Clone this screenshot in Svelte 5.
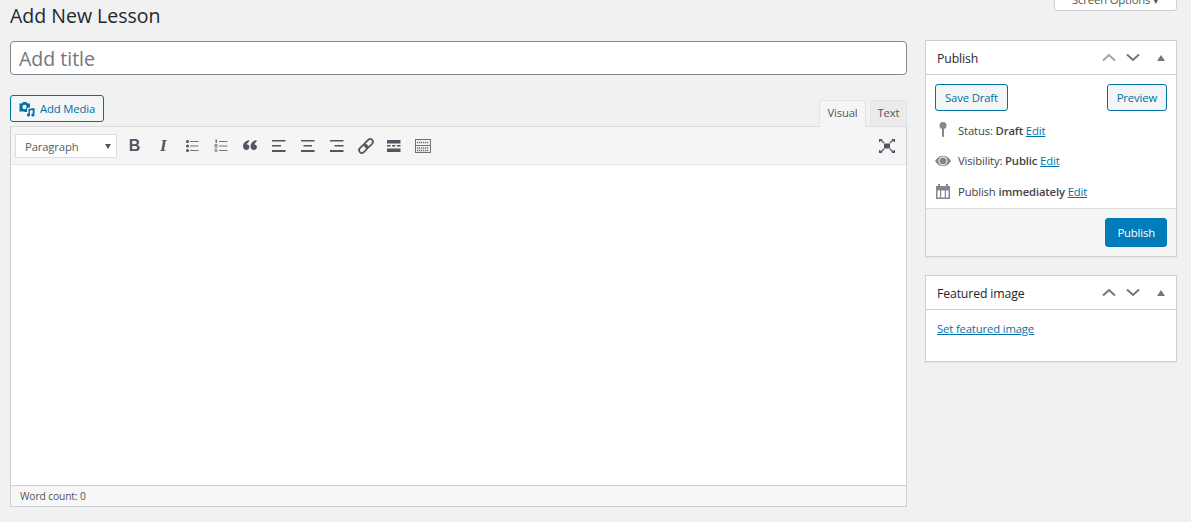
<script lang="ts">
  const tools = ["bold", "italic", "ul", "ol", "quote", "left", "center", "right", "link", "more", "kitchen"];
</script>

<div class="page">
  <header class="top">
    <h1>Add New Lesson</h1>
    <button class="screen-options">Screen Options ▾</button>
  </header>

  <div class="columns">
    <main class="editor-col">
      <input class="title" placeholder="Add title" />

      <div class="editor-tabs">
        <button class="btn add-media">
          <svg width="16" height="16" viewBox="0 0 16 16" fill="#0071a1">
            <path d="M0.500 2.500h2.500l1-1.500h3.500l1 1.500h2.500v4h-1.500c-1 .6-1.500 1.400-1.500 2.500v2H5.500V10.500H.5z"/>
            <circle cx="5.500" cy="6" r="2.200" fill="#f3f5f6"/>
            <path d="M9.500 8l6-1v7a1.600 1.500 0 1 1-1.800-1.400V9l-2.700.5v5a1.600 1.500 0 1 1-1.500-1.900z"/>
          </svg>
          Add Media
        </button>
        <div class="tabs">
          <span class="tab active">Visual</span>
          <span class="tab">Text</span>
        </div>
      </div>

      <div class="editor">
        <div class="toolbar">
          <div class="format-select">Paragraph<span class="arrow"></span></div>
          <div class="tool-group">
            {#each tools as t}
              <span class="tool">
                {#if t === "bold"}
                  <span class="glyph-b">B</span>
                {:else if t === "italic"}
                  <span class="glyph-i">I</span>
                {:else if t === "ul"}
                  <svg width="20" height="20" viewBox="0 0 20 20" fill="#50575e">
                    <rect x="4" y="4" width="3" height="3" rx="1.500"/><rect x="4" y="8.500" width="3" height="3" rx="1.500"/><rect x="4" y="13" width="3" height="3" rx="1.500"/>
                    <rect x="8" y="5" width="8.500" height="1" opacity=".8"/><rect x="8" y="9.500" width="8.500" height="1" opacity=".8"/><rect x="8" y="14" width="8.500" height="1" opacity=".8"/>
                  </svg>
                {:else if t === "ol"}
                  <svg width="20" height="20" viewBox="0 0 20 20" fill="#50575e">
                    <rect x="4.500" y="3.500" width="1.500" height="3.500" opacity=".8"/><rect x="3.500" y="8" width="3" height="3.500" opacity=".6"/><rect x="3.500" y="12.500" width="3" height="3.500" opacity=".5"/>
                    <rect x="8" y="5" width="8.500" height="1" opacity=".8"/><rect x="8" y="9.500" width="8.500" height="1" opacity=".8"/><rect x="8" y="14" width="8.500" height="1" opacity=".8"/>
                  </svg>
                {:else if t === "quote"}
                  <svg width="20" height="20" viewBox="0 0 20 20" fill="#50575e">
                    <path d="M9 4v1.700C7.600 6.500 7 7.500 7 8.600c1.400 0 2.400 1 2.400 2.500 0 1.700-1.200 2.900-2.800 2.900C4.400 14 3 12.500 3 10.200 3 7.500 5.300 4.800 9 4z"/>
                    <path d="M16.500 4v1.700c-1.400.8-2 1.800-2 2.900 1.400 0 2.400 1 2.400 2.500 0 1.700-1.200 2.900-2.800 2.900-2.200 0-3.600-1.500-3.600-3.800C10.500 7.500 12.800 4.800 16.500 4z"/>
                  </svg>
                {:else if t === "left"}
                  <svg width="20" height="20" viewBox="0 0 20 20" fill="#50575e">
                    <rect x="3" y="4" width="13.500" height="1.500"/><rect x="3" y="9" width="9" height="1.500"/><rect x="3" y="14" width="13.500" height="2"/>
                  </svg>
                {:else if t === "center"}
                  <svg width="20" height="20" viewBox="0 0 20 20" fill="#50575e">
                    <rect x="3" y="4" width="13.500" height="1.500"/><rect x="5.500" y="9" width="8.500" height="1.500"/><rect x="3" y="14" width="13.500" height="2"/>
                  </svg>
                {:else if t === "right"}
                  <svg width="20" height="20" viewBox="0 0 20 20" fill="#50575e">
                    <rect x="3" y="4" width="13.500" height="1.500"/><rect x="7.500" y="9" width="9" height="1.500"/><rect x="3" y="14" width="13.500" height="2"/>
                  </svg>
                {:else if t === "link"}
                  <svg width="20" height="20" viewBox="0 0 20 20" fill="none" stroke="#50575e" stroke-width="1.700">
                    <rect x="10" y="2.500" width="5.500" height="9.500" rx="2.750" transform="rotate(45 12.750 7.250)"/>
                    <rect x="4.500" y="8" width="5.500" height="9.500" rx="2.750" transform="rotate(45 7.250 12.750)"/>
                  </svg>
                {:else if t === "more"}
                  <svg width="20" height="20" viewBox="0 0 20 20" fill="#50575e">
                    <rect x="3" y="4" width="13.500" height="3.500"/><rect x="3" y="9" width="3.500" height="1.500"/><rect x="8" y="9" width="3.500" height="1.500"/><rect x="13" y="9" width="3.500" height="1.500"/><rect x="3" y="12.500" width="13.500" height="3.500"/>
                  </svg>
                {:else}
                  <svg width="18" height="16" viewBox="0 0 18 16" fill="none" stroke="#6b7277">
                    <rect x="1.500" y="1.500" width="15" height="13"/>
                    <path d="M1.500 7.500h15" />
                    <path d="M3 4.500h12M3 10h12M3 12.500h12" stroke-dasharray="1.300 .7" stroke-width="1.300"/>
                  </svg>
                {/if}
              </span>
            {/each}
          </div>
          <span class="fullscreen">
            <svg width="16" height="14" viewBox="0 0 16 14" fill="#50575e">
              <rect x="5" y="4.500" width="6" height="5"/>
              <path d="M0 0h3.500L2.800 1 5.500 3.500 4.500 4.500 1.800 1.800 1 3H0zM16 0v3h-1l-.8-1.200-2.700 2.700-1-1L13.200 1 12.500 0zM0 14v-3h1l.8 1.200 2.700-2.700 1 1L2.800 13l.7 1zM16 14h-3.500l.7-1-2.700-2.500 1-1 2.700 2.700.8-1.200h1z"/>
            </svg>
          </span>
        </div>
        <div class="edit-area"></div>
        <div class="status">Word count: 0</div>
      </div>
    </main>

    <aside class="side">
      <section class="box">
        <div class="box-head">
          <h2>Publish</h2>
          <div class="handles">
            <svg width="14" height="9" viewBox="0 0 14 9" fill="none" stroke="#a0a5aa" stroke-width="2"><path d="M1 7.500l6-5.500 6 5.500"/></svg>
            <svg width="14" height="9" viewBox="0 0 14 9" fill="none" stroke="#72777c" stroke-width="2"><path d="M1 1.500l6 5.500 6-5.500"/></svg>
            <span class="caret"></span>
          </div>
        </div>
        <div class="publish-actions">
          <button class="btn">Save Draft</button>
          <button class="btn">Preview</button>
        </div>
        <div class="misc">
          <div class="misc-row">
            <svg class="misc-icon" width="20" height="20" viewBox="0 0 20 20" fill="#82878c"><circle cx="8" cy="5.500" r="3.500"/><rect x="7" y="8" width="2" height="9" rx="1"/></svg>
            <span>Status: <b>Draft</b> <a href="#edit">Edit</a></span>
          </div>
          <div class="misc-row">
            <svg class="misc-icon" width="20" height="20" viewBox="0 0 20 20" fill="#82878c"><path fill-rule="evenodd" d="M0 10c2-3.500 5-5.300 8-5.300s6.200 1.800 8 5.300c-1.800 3.500-5 5.300-8 5.300S2 13.500 0 10zm3.500 0a4.500 4.500 0 1 0 9 0 4.500 4.500 0 0 0-9 0z"/><circle cx="8" cy="10" r="3.500"/></svg>
            <span>Visibility: <b>Public</b> <a href="#edit">Edit</a></span>
          </div>
          <div class="misc-row">
            <svg class="misc-icon" width="20" height="20" viewBox="0 0 20 20" fill="#82878c"><path fill-rule="evenodd" d="M1 5h2V3h2v2h6V3h2v2h2v13H1zm1.500 4.500v7H5v-7zm3.700 0v7h3.600v-7zm4.800 0v7h2.500v-7z"/></svg>
            <span>Publish <b>immediately</b> <a href="#edit">Edit</a></span>
          </div>
        </div>
        <div class="major">
          <button class="btn primary">Publish</button>
        </div>
      </section>

      <section class="box">
        <div class="box-head">
          <h2>Featured image</h2>
          <div class="handles">
            <svg width="14" height="9" viewBox="0 0 14 9" fill="none" stroke="#72777c" stroke-width="2"><path d="M1 7.500l6-5.500 6 5.500"/></svg>
            <svg width="14" height="9" viewBox="0 0 14 9" fill="none" stroke="#72777c" stroke-width="2"><path d="M1 1.500l6 5.500 6-5.500"/></svg>
            <span class="caret"></span>
          </div>
        </div>
        <div class="featured"><a href="#set">Set featured image</a></div>
      </section>
    </aside>
  </div>
</div>

<style>
  :global(body) {
    background: #f1f1f1;
    overflow: hidden;
  }

  .page {
    height: 522px;
    overflow: hidden;
    padding: 0 14px 0 10px;
    box-sizing: border-box;
    font-family: "Open Sans", "Noto Sans", sans-serif;
    font-size: 11.300px;
    letter-spacing: -0.150px;
    color: #444;
  }

  button {
    font-family: inherit;
    letter-spacing: inherit;
  }

  .top {
    display: flex;
    justify-content: space-between;
    height: 40px;
  }

  h1 {
    margin: 3px 0 0;
    font-size: 19.500px;
    line-height: 26px;
    font-weight: 400;
    letter-spacing: 0;
    color: #23282d;
  }

  .screen-options {
    width: 123px;
    height: 24px;
    margin-top: -13px;
    padding: 0;
    background: #fff;
    border: 1px solid #ccd0d4;
    border-radius: 3px;
    color: #555;
    font-size: 11.300px;
  }

  .columns {
    display: grid;
    grid-template-columns: 897px 252px;
    gap: 18px;
    align-items: start;
  }

  .title {
    display: block;
    width: 100%;
    height: 34px;
    margin-top: 1px;
    box-sizing: border-box;
    padding: 0 8px;
    border: 1px solid #7e8993;
    border-radius: 4px;
    background: #fff;
    font-family: inherit;
    font-size: 19.500px;
    letter-spacing: 0;
    outline: none;
  }

  .title::placeholder {
    color: #72777c;
    opacity: 1;
  }

  .editor-tabs {
    display: flex;
    justify-content: space-between;
    align-items: flex-end;
    margin-top: 20px;
    height: 31px;
  }

  .btn {
    display: inline-flex;
    align-items: center;
    height: 27px;
    padding: 0 9px;
    box-sizing: border-box;
    border: 1px solid #0071a1;
    border-radius: 3px;
    background: #f3f5f6;
    color: #0071a1;
    font-size: 11.300px;
  }

  .add-media {
    gap: 5px;
    padding: 0 6px 0 8px;
    width: 94px;
    margin-bottom: 4px;
  }

  .tabs {
    display: flex;
    gap: 4px;
  }

  .tab {
    height: 26px;
    box-sizing: border-box;
    width: 37px;
    text-align: center;
    line-height: 24px;
    background: #ebebeb;
    border: 1px solid #e2e4e7;
    border-bottom: 0;
    color: #555;
  }

  .tab.active {
    width: 47px;
    background: #f5f5f5;
    margin-bottom: -1px;
    height: 27px;
    position: relative;
  }

  .editor {
    height: 381px;
    box-sizing: border-box;
    display: flex;
    flex-direction: column;
    border: 1px solid #ccd0d4;
    border-top-color: #dcdcde;
    background: #fff;
  }

  .toolbar {
    display: flex;
    align-items: center;
    height: 38px;
    flex: none;
    padding: 0 11px 0 4px;
    box-sizing: border-box;
    background: #f5f5f5;
    border-bottom: 1px solid #e2e4e7;
  }

  .format-select {
    position: relative;
    width: 102px;
    height: 24px;
    box-sizing: border-box;
    padding-left: 9px;
    line-height: 23px;
    background: #fff;
    border: 1px solid #dddddd;
    color: #555d66;
  }

  .arrow {
    position: absolute;
    right: 5px;
    top: 9px;
    border: 3.500px solid transparent;
    border-top: 5px solid #50575e;
    border-bottom: 0;
  }

  .tool-group {
    display: flex;
    margin: 1px 0 0 3px;
  }

  .tool {
    width: 28.900px;
    height: 24px;
    display: flex;
    align-items: center;
    justify-content: center;
  }

  .glyph-b,
  .glyph-i {
    font-family: "Liberation Sans", sans-serif;
    font-size: 16px;
    font-weight: 700;
    color: #50575e;
  }

  .glyph-i {
    font-family: "Liberation Serif", serif;
    font-style: italic;
    font-size: 17px;
  }

  .fullscreen {
    margin: 1px 0 0 auto;
    display: flex;
  }

  .edit-area {
    flex: 1;
  }

  .status {
    height: 20px;
    flex: none;
    padding-left: 9px;
    line-height: 21px;
    background: #f7f7f7;
    border-top: 1px solid #ccd0d4;
    font-size: 10.300px;
    color: #555;
  }

  .side {
    display: flex;
    flex-direction: column;
    gap: 18px;
  }

  .box {
    border: 1px solid #ccd0d4;
    background: #fff;
    box-shadow: 0 1px 1px rgba(0, 0, 0, 0.04);
  }

  .box-head {
    display: flex;
    align-items: center;
    justify-content: space-between;
    height: 33px;
    padding: 0 11px 0 11px;
    border-bottom: 1px solid #ccd0d4;
  }

  h2 {
    margin: 1px 0 0;
    font-size: 12.300px;
    font-weight: 400;
    color: #23282d;
  }

  .handles {
    display: flex;
    align-items: center;
    gap: 10px;
  }

  .caret {
    margin-left: 7px;
    border: 4px solid transparent;
    border-bottom: 6px solid #72777c;
    border-top: 0;
  }

  .publish-actions {
    display: flex;
    justify-content: space-between;
    padding: 9px 9px 0;
  }

  .misc {
    padding: 4px 0 1.500px 9px;
  }

  .misc-row {
    display: flex;
    align-items: center;
    gap: 3px;
    height: 30.500px;
  }

  .misc-row b {
    font-weight: 600;
  }

  a {
    color: #0073aa;
  }

  .major {
    display: flex;
    justify-content: flex-end;
    padding: 9px;
    background: #f5f5f5;
    border-top: 1px solid #dddddd;
  }

  .primary {
    height: 29px;
    padding: 0 11px;
    background: #007cba;
    border-color: #007cba;
    color: #fff;
  }

  .featured {
    height: 51px;
    padding: 11px 11px 0;
    box-sizing: border-box;
  }
</style>
